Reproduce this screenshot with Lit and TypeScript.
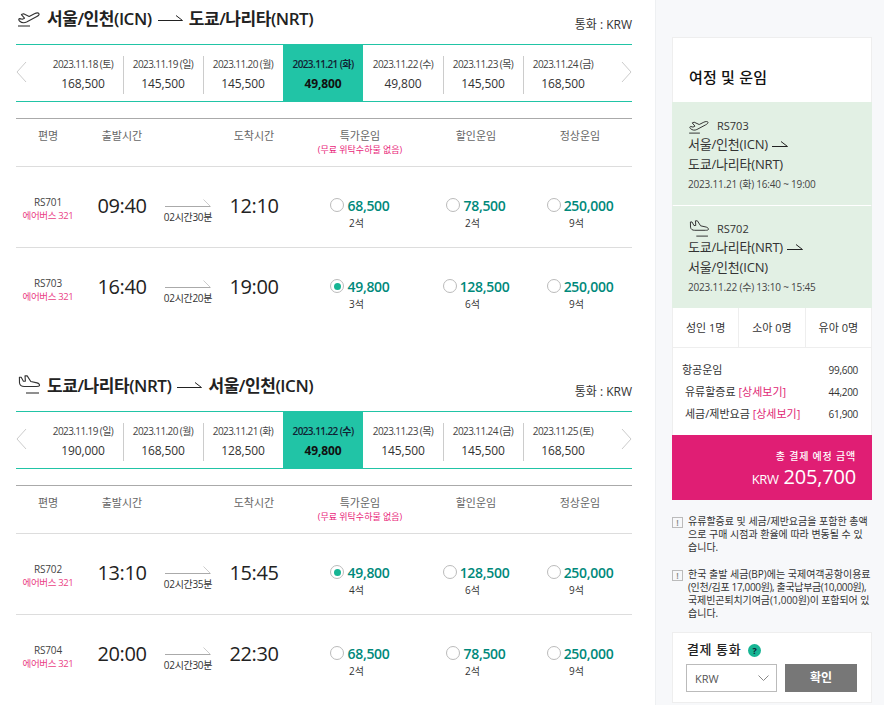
import { html, css, LitElement, svg } from "lit";
import { customElement } from "lit/decorators.js";

const takeoff = (w: number, h: number) => html`<svg class="plane" width=${w} height=${h} viewBox="0 0 24 19" fill="none">
  ${svg`<path d="M2.5 13c-1.2-1-.9-2.4.4-2.4l2.4.7 2.2-1.1L4.4 6.6l2.2-.8 5.6 2.6 5.2-2.6c1.8-.9 4-1 4.6-.1.6 1-.8 2.1-2.6 3.1L9.6 14c-2.5 1.2-5 .8-7.1-1z" stroke="#333" stroke-width="1.1" stroke-linejoin="round"/>
  <path d="M1 18h12" stroke="#333" stroke-width="1.1"/>`}
</svg>`;

const landing = (w: number, h: number) => html`<svg class="plane" width=${w} height=${h} viewBox="0 0 24 19" fill="none">
  ${svg`<path d="M2.4 2.2h1.8l2.2 4 2-.1L8 .9h2.2l3.6 5.6 6.3 1.4c1.8.5 2.9 1.9 2.3 2.9-.3.6-1.4.7-3 .7H7.2C4.6 11.5 2.9 10.4 2.5 8z" stroke="#333" stroke-width="1.1" stroke-linejoin="round"/>
  <path d="M9 18h13" stroke="#333" stroke-width="1.1"/>`}
</svg>`;

const routeArrow = (w: number) => html`<svg class="route-arrow" width=${w} height="8" viewBox="0 0 ${w} 8" fill="none">
  ${svg`<path d="M0 6.5H${w - 0.5}L${w - 7} 1.5" stroke="#222" stroke-width="1"/>`}
</svg>`;

type Fare = { price: string; seats: string; on?: boolean };
type Flight = { no: string; dep: string; arr: string; dur: string; fares: Fare[] };
type Section = {
  from: string;
  to: string;
  icon: unknown;
  dates: [string, string][];
  flights: Flight[];
};

const sections: Section[] = [
  {
    from: "서울/인천(ICN)",
    to: "도쿄/나리타(NRT)",
    icon: takeoff(24, 19),
    dates: [
      ["2023.11.18 (토)", "168,500"],
      ["2023.11.19 (일)", "145,500"],
      ["2023.11.20 (월)", "145,500"],
      ["2023.11.21 (화)", "49,800"],
      ["2023.11.22 (수)", "49,800"],
      ["2023.11.23 (목)", "145,500"],
      ["2023.11.24 (금)", "168,500"],
    ],
    flights: [
      {
        no: "RS701",
        dep: "09:40",
        arr: "12:10",
        dur: "02시간30분",
        fares: [
          { price: "68,500", seats: "2석" },
          { price: "78,500", seats: "2석" },
          { price: "250,000", seats: "9석" },
        ],
      },
      {
        no: "RS703",
        dep: "16:40",
        arr: "19:00",
        dur: "02시간20분",
        fares: [
          { price: "49,800", seats: "3석", on: true },
          { price: "128,500", seats: "6석" },
          { price: "250,000", seats: "9석" },
        ],
      },
    ],
  },
  {
    from: "도쿄/나리타(NRT)",
    to: "서울/인천(ICN)",
    icon: landing(24, 19),
    dates: [
      ["2023.11.19 (일)", "190,000"],
      ["2023.11.20 (월)", "168,500"],
      ["2023.11.21 (화)", "128,500"],
      ["2023.11.22 (수)", "49,800"],
      ["2023.11.23 (목)", "145,500"],
      ["2023.11.24 (금)", "145,500"],
      ["2023.11.25 (토)", "168,500"],
    ],
    flights: [
      {
        no: "RS702",
        dep: "13:10",
        arr: "15:45",
        dur: "02시간35분",
        fares: [
          { price: "49,800", seats: "4석", on: true },
          { price: "128,500", seats: "6석" },
          { price: "250,000", seats: "9석" },
        ],
      },
      {
        no: "RS704",
        dep: "20:00",
        arr: "22:30",
        dur: "02시간30분",
        fares: [
          { price: "68,500", seats: "2석" },
          { price: "78,500", seats: "2석" },
          { price: "250,000", seats: "9석" },
        ],
      },
    ],
  },
];

@customElement("app-root")
export class AppRoot extends LitElement {
  static override styles = css`
    :host {
      display: flex;
      width: 884px;
      height: 705px;
      overflow: hidden;
      background: #fff;
      color: #222;
      font-family: "Open Sans", "Noto Sans CJK KR", sans-serif;
    }

    .main {
      width: 616px;
      padding: 0 23px 0 16px;
      flex: none;
    }
    .section {
      height: 367px;
    }
    .head {
      height: 44px;
      display: flex;
      justify-content: space-between;
    }
    .title {
      display: flex;
      align-items: center;
      height: 34px;
      font-size: 17px;
      font-weight: 600;
      color: #222;
      white-space: nowrap;
      letter-spacing: -0.45px;
    }
    .title .plane {
      margin: 1px 6px 0 1px;
    }
    .title .route-arrow {
      margin: 1px 6px 0 6px;
    }
    .currency {
      margin-top: 16px;
      font-size: 12px;
      line-height: 17px;
      color: #333;
    }

    .strip {
      position: relative;
      display: flex;
      height: 56px;
      padding-left: 27px;
      border-top: 1px solid #21c4a6;
      border-bottom: 1px solid #21c4a6;
      margin-bottom: 16px;
    }
    .nav {
      position: absolute;
      top: 16px;
    }
    .nav.prev {
      left: 0;
    }
    .nav.next {
      right: 0;
    }
    .day {
      width: 80px;
      padding-top: 12px;
      text-align: center;
      position: relative;
    }
    .day.sep::before {
      content: "";
      position: absolute;
      left: 0;
      top: 11px;
      height: 38px;
      width: 1px;
      background: #ccc;
    }
    .day .date {
      font-size: 10px;
      line-height: 14px;
      color: #444;
      letter-spacing: -0.6px;
    }
    .day .amount {
      margin-top: 4px;
      font-size: 12px;
      line-height: 17px;
      color: #333;
      letter-spacing: -0.1px;
    }
    .day.active {
      background: #21c4a6;
    }
    .day.active .date {
      color: #123;
      font-weight: 600;
    }
    .day.active .amount {
      color: #111;
      font-weight: 700;
    }

    .cols {
      display: grid;
      grid-template-columns: 64px 84px 48px 84px 128px 104px 104px;
    }
    .thead {
      height: 47px;
      border-top: 1px solid #aaa;
      border-bottom: 1px solid #ddd;
      text-align: center;
      font-size: 11px;
      color: #666;
    }
    .thead > div {
      padding-top: 9px;
      line-height: 15px;
    }
    .thead small {
      display: block;
      line-height: 13px;
      font-size: 9px;
      color: #e91e7a;
      white-space: nowrap;
    }

    .row {
      height: 80px;
      border-bottom: 1px solid #ddd;
    }
    .row.last {
      border-bottom: 0;
    }
    .flight {
      margin-top: 29px;
      text-align: center;
      font-size: 10px;
      line-height: 13px;
      color: #444;
      letter-spacing: -0.2px;
    }
    .flight span {
      display: block;
      font-size: 9.5px;
      letter-spacing: -0.35px;
      color: #ea3f86;
      white-space: nowrap;
    }
    .time {
      margin-top: 27px;
      text-align: center;
      font-size: 20px;
      line-height: 24px;
      color: #222;
      letter-spacing: -0.4px;
    }
    .dur {
      margin-top: 32px;
      display: flex;
      flex-direction: column;
      align-items: center;
      font-size: 10px;
      line-height: 13px;
      color: #333;
      white-space: nowrap;
      letter-spacing: -0.3px;
    }
    .dur svg {
      margin-bottom: 4px;
    }
    .fare {
      margin-top: 29px;
      display: flex;
      flex-direction: column;
      align-items: center;
    }
    .fare .line {
      display: flex;
      align-items: center;
      gap: 3px;
      height: 18px;
    }
    .radio {
      width: 14px;
      height: 14px;
      box-sizing: border-box;
      border: 1.5px solid #bbb;
      border-radius: 50%;
      display: flex;
      align-items: center;
      justify-content: center;
      background: #fff;
    }
    .radio.on::after {
      content: "";
      width: 7px;
      height: 7px;
      border-radius: 50%;
      background: #17b594;
    }
    .price {
      font-size: 14px;
      font-weight: 600;
      color: #00897b;
      letter-spacing: -0.3px;
    }
    .seats {
      margin: 2px 7px 0 0;
      font-size: 10px;
      line-height: 14px;
      color: #333;
    }

    .side {
      flex: 1;
      box-sizing: border-box;
      height: 705px;
      padding: 37px 12px 0 16px;
      background: #f7f8fa;
      border-left: 1px solid #eef0f2;
    }
    .card {
      width: 200px;
      box-sizing: border-box;
      background: #fff;
      border: 1px solid #eee;
      border-bottom: 0;
    }
    .card h2 {
      margin: 0;
      height: 64px;
      padding: 28px 0 0 16px;
      box-sizing: border-box;
      font-size: 15px;
      line-height: 22px;
      font-weight: 500;
      color: #111;
      letter-spacing: 0.2px;
    }
    .seg {
      height: 103px;
      box-sizing: border-box;
      padding: 15px 0 0 16px;
      background: #e2f0e4;
      margin: 0 -1px;
      font-size: 13px;
      color: #333;
    }
    .seg + .seg {
      margin-top: 1px;
      height: 102px;
      padding-top: 14px;
    }
    .seg .no {
      display: flex;
      align-items: center;
      gap: 7px;
      height: 17px;
      font-size: 11px;
      color: #333;
    }
    .seg .place {
      display: flex;
      align-items: center;
      line-height: 20px;
      letter-spacing: -0.2px;
      white-space: nowrap;
    }
    .seg .place svg {
      margin: 0 0 0 4px;
    }
    .seg .when {
      margin-top: 2px;
      font-size: 10px;
      line-height: 16px;
      color: #444;
      letter-spacing: -0.2px;
    }

    .pax {
      display: flex;
      height: 39px;
      border-bottom: 1px solid #eee;
    }
    .pax div {
      flex: 1;
      text-align: center;
      font-size: 11px;
      line-height: 39px;
      color: #333;
    }
    .pax div + div {
      border-left: 1px solid #eee;
    }

    .costs {
      height: 87px;
      box-sizing: border-box;
      padding: 11px 13px 0 9px;
      font-size: 11px;
      color: #333;
    }
    .costs div {
      display: flex;
      justify-content: space-between;
      line-height: 22px;
    }
    .costs .sub {
      padding-left: 3px;
    }
    .costs .val {
      font-size: 10px;
      letter-spacing: -0.3px;
    }
    .costs em {
      font-style: normal;
      color: #e01e74;
    }

    .total {
      height: 65px;
      margin: 0 -1px;
      box-sizing: border-box;
      padding: 13px 16px 0 0;
      background: #e01e74;
      color: #fff;
      text-align: right;
    }
    .total .label {
      font-size: 10px;
      line-height: 16px;
      font-weight: 500;
      letter-spacing: 0.8px;
    }
    .total .sum {
      font-size: 20px;
      line-height: 26px;
      letter-spacing: -0.2px;
    }
    .total .sum small {
      font-size: 13px;
      letter-spacing: -0.4px;
    }

    .note {
      display: flex;
      gap: 5px;
      width: 200px;
      margin-top: 15px;
      font-size: 10px;
      line-height: 13px;
      color: #333;
      white-space: nowrap;
    }
    .note + .note {
      margin-top: 14px;
    }
    .note .tight {
      letter-spacing: -0.35px;
    }
    .note .snug {
      letter-spacing: -0.1px;
    }
    .mark {
      flex: none;
      width: 11px;
      height: 11px;
      margin-top: 2px;
      box-sizing: border-box;
      border: 1px solid #bbb;
      color: #888;
      font-size: 9px;
      line-height: 9px;
      text-align: center;
      font-weight: 600;
    }

    .pay {
      width: 200px;
      height: 71px;
      box-sizing: border-box;
      margin-top: 12px;
      padding: 5px 13px 0 13px;
      background: #fff;
      border: 1px solid #eee;
    }
    .pay .label {
      display: flex;
      align-items: center;
      gap: 7px;
      height: 20px;
      padding-left: 1px;
      font-size: 13px;
      font-weight: 500;
      color: #222;
      letter-spacing: 0.6px;
    }
    .help {
      width: 13px;
      height: 13px;
      margin-top: 5px;
      border-radius: 50%;
      background: #17b594;
      color: #123;
      font-size: 9px;
      font-weight: 700;
      line-height: 13px;
      text-align: center;
      letter-spacing: 0;
    }
    .pay .controls {
      display: flex;
      gap: 8px;
      margin-top: 6px;
    }
    .select {
      width: 91px;
      height: 28px;
      box-sizing: border-box;
      padding: 0 7px 0 8px;
      border: 1px solid #bbb;
      display: flex;
      align-items: center;
      justify-content: space-between;
      font-size: 11px;
      color: #555;
    }
    .btn {
      width: 72px;
      height: 28px;
      background: #777;
      color: #fff;
      font-size: 12px;
      font-weight: 700;
      line-height: 28px;
      text-align: center;
    }
  `;

  private strip(dates: [string, string][]) {
    return html`
      <div class="strip">
        <svg class="nav prev" width="11" height="22" viewBox="0 0 11 22" fill="none"><path d="M10 1 1 11l9 10" stroke="#ccc" stroke-width="1"/></svg>
        ${dates.map(([d, a], i) => html`
          <div class="day ${i === 3 ? "active" : ""} ${i > 0 && i !== 3 && i !== 4 ? "sep" : ""}">
            <div class="date">${d}</div>
            <div class="amount">${a}</div>
          </div>`)}
        <svg class="nav next" width="11" height="22" viewBox="0 0 11 22" fill="none"><path d="m1 1 9 10-9 10" stroke="#ccc" stroke-width="1"/></svg>
      </div>
    `;
  }

  private row(f: Flight, last: boolean) {
    return html`
      <div class="cols row ${last ? "last" : ""}">
        <div class="flight">${f.no}<span>에어버스 321</span></div>
        <div class="time">${f.dep}</div>
        <div class="dur">
          <svg width="46" height="8" viewBox="0 0 46 8" fill="none"><path d="M0 7.5h45.5" stroke="#aaa"/><path d="m45 7-6.5-6.5" stroke="#ccc"/></svg>
          ${f.dur}
        </div>
        <div class="time">${f.arr}</div>
        ${f.fares.map((x) => html`
          <div class="fare">
            <div class="line">
              <span class="radio ${x.on ? "on" : ""}"></span>
              <span class="price">${x.price}</span>
            </div>
            <div class="seats">${x.seats}</div>
          </div>`)}
      </div>
    `;
  }

  private section(s: Section) {
    return html`
      <section class="section">
        <div class="head">
          <div class="title">${s.icon}${s.from}${routeArrow(25)}${s.to}</div>
          <div class="currency">통화 : KRW</div>
        </div>
        ${this.strip(s.dates)}
        <div class="cols thead">
          <div>편명</div>
          <div>출발시간</div>
          <div></div>
          <div>도착시간</div>
          <div>특가운임<small>(무료 위탁수하물 없음)</small></div>
          <div>할인운임</div>
          <div>정상운임</div>
        </div>
        ${s.flights.map((f, i) => this.row(f, i === s.flights.length - 1))}
      </section>
    `;
  }

  override render() {
    return html`
      <div class="main">${sections.map((s) => this.section(s))}</div>
      <aside class="side">
        <div class="card">
          <h2>여정 및 운임</h2>
          <div class="seg">
            <div class="no">${takeoff(22, 17)}RS703</div>
            <div class="place">서울/인천(ICN)${routeArrow(16)}</div>
            <div class="place">도쿄/나리타(NRT)</div>
            <div class="when">2023.11.21 (화) 16:40 ~ 19:00</div>
          </div>
          <div class="seg">
            <div class="no">${landing(22, 17)}RS702</div>
            <div class="place">도쿄/나리타(NRT)${routeArrow(16)}</div>
            <div class="place">서울/인천(ICN)</div>
            <div class="when">2023.11.22 (수) 13:10 ~ 15:45</div>
          </div>
          <div class="pax">
            <div>성인 1명</div>
            <div>소아 0명</div>
            <div>유아 0명</div>
          </div>
          <div class="costs">
            <div><span>항공운임</span><span class="val">99,600</span></div>
            <div class="sub"><span>유류할증료 <em>[상세보기]</em></span><span class="val">44,200</span></div>
            <div class="sub"><span>세금/제반요금 <em>[상세보기]</em></span><span class="val">61,900</span></div>
          </div>
          <div class="total">
            <div class="label">총 결제 예정 금액</div>
            <div class="sum"><small>KRW</small> 205,700</div>
          </div>
        </div>
        <div class="note">
          <span class="mark">!</span>
          <span>유류할증료 및 세금/제반요금을 포함한 총액<br />으로 구매 시점과 환율에 따라 변동될 수 있<br />습니다.</span>
        </div>
        <div class="note">
          <span class="mark">!</span>
          <span>한국 출발 세금(BP)에는 국제여객공항이용료<br /><span class="tight">(인천/김포 17,000원), 출국납부금(10,000원),</span><br /><span class="snug">국제빈곤퇴치기여금(1,000원)이 포함되어 있</span><br />습니다.</span>
        </div>
        <div class="pay">
          <div class="label">결제 통화 <span class="help">?</span></div>
          <div class="controls">
            <div class="select">KRW
              <svg width="11" height="7" viewBox="0 0 11 7" fill="none"><path d="m.5.5 5 5 5-5" stroke="#888"/></svg>
            </div>
            <div class="btn">확인</div>
          </div>
        </div>
      </aside>
    `;
  }
}

declare global {
  interface HTMLElementTagNameMap {
    "app-root": AppRoot;
  }
}
